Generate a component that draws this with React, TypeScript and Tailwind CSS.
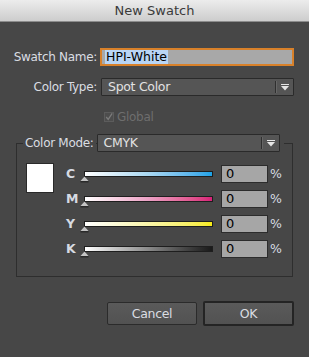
import React from 'react'

const font = { fontFamily: '"DejaVu Sans", "Liberation Sans", sans-serif' }

function Arrow() {
  return (
    <svg width="8" height="7" viewBox="0 0 8 7" className="block">
      <rect x="0" y="0" width="8" height="1" fill="#e6e6e6" />
      <path d="M0 2 H8 L4 6.5 Z" fill="#e6e6e6" />
    </svg>
  )
}

function Select({ value, w }: { value: string; w: string }) {
  return (
    <div className={`${w} h-[18px] flex items-center bg-[#555555] border border-[#2a2a2a] rounded-[1px]`}>
      <span className="flex-1 pl-[6px] text-[#e2e2e2] text-[12.5px]">{value}</span>
      <span className="w-px h-[12px] bg-[#2f2f2f]" />
      <span className="w-px h-[12px] bg-[#666]" />
      <span className="w-[16px] flex justify-center">
        <Arrow />
      </span>
    </div>
  )
}

const channels = [
  { k: 'C', grad: 'bg-gradient-to-r from-white via-[#a9d8f2] to-[#1aa3e8]' },
  { k: 'M', grad: 'bg-gradient-to-r from-white via-[#eaa0c4] to-[#d81f78]' },
  { k: 'Y', grad: 'bg-gradient-to-r from-white via-[#fbf6a8] to-[#f7ec12]' },
  { k: 'K', grad: 'bg-gradient-to-r from-white via-[#8a8a8a] to-[#1a1a1a]' },
]

function SliderRow({ k, grad }: { k: string; grad: string }) {
  return (
    <div className="flex items-start h-[18px]">
      <span className="w-[18px] pt-[2px] text-[#d6dbe2] text-[12.5px] font-bold">{k}</span>
      <div className="relative w-[129px] h-[18px]">
        <div className={`mt-[6px] h-[6px] border border-[#1e1e1e] ${grad}`} />
        <svg width="9" height="7" viewBox="0 0 9 7" className="absolute left-[-4px] top-[11px]">
          <path d="M4.5 0.5 L8.5 5 H0.5 Z" fill="#c4c4c4" />
          <rect x="0.5" y="5" width="8" height="1.5" fill="#2a2a2a" />
        </svg>
      </div>
      <div className="ml-[8px] w-[47px] h-[18px] bg-[#a6a6a6] border border-[#2c2c2c] pl-[4px] text-[13px] leading-[16px] text-black">0</div>
      <span className="ml-[2px] pt-[2px] text-[#d6dbe2] text-[12.5px]">%</span>
    </div>
  )
}

export default function App() {
  return (
    <div style={font} className="w-[309px] h-[357px] bg-[#474747] flex flex-col text-[12px] leading-[14px] tracking-[-0.3px] overflow-hidden">
      {/* title bar */}
      <div className="h-[22px] bg-gradient-to-b from-[#ececec] to-[#cdcdcd] border-b border-[#8c8c8c] flex items-center justify-center text-[#3a3a3a] text-[13px] tracking-normal">
        New Swatch
      </div>

      {/* name */}
      <div className="flex items-center mt-[26px]">
        <span className="w-[97px] text-right text-[#dadde2]">Swatch Name:</span>
        <div className="ml-[3px] w-[194px] h-[18px] bg-[#a8a8a8] border-2 border-[#d8812a] flex items-center pl-[3px]">
          <span className="bg-[#b9d5f5] text-black px-[1px] leading-[14px] text-[12.5px] tracking-normal">HPI-White</span>
        </div>
      </div>

      {/* color type */}
      <div className="flex items-center mt-[12px]">
        <span className="w-[97px] text-right text-[#dadde2]">Color Type:</span>
        <div className="ml-[4px]">
          <Select value="Spot Color" w="w-[193px]" />
        </div>
      </div>

      {/* global */}
      <div className="flex items-center mt-[14px] pl-[104px] text-[#6e6e6e]">
        <span className="w-[10px] h-[10px] border border-[#5c5c5c] bg-[#4d4d4d] flex items-center justify-center">
          <svg width="10" height="10" viewBox="0 0 10 10">
            <path d="M1.5 5 L4 8 L9 0.5" stroke="#7c7c7c" strokeWidth="1.6" fill="none" />
          </svg>
        </span>
        <span className="ml-[3px]">Global</span>
      </div>

      {/* color mode group */}
      <div className="ml-[16px] mt-[19px] w-[277px] h-[134px] border border-[#2e2e2e]">
        <div className="flex items-center -mt-[10px]">
          <span className="ml-[6px] px-[2px] bg-[#474747] text-[#dadde2]">Color Mode:</span>
          <div className="ml-[1px] bg-[#474747] pr-[4px]">
            <Select value="CMYK" w="w-[183px]" />
          </div>
        </div>
        <div className="flex mt-[11px]">
          <div className="ml-[9px] w-[28px] h-[30px] bg-white border border-[#2a2a2a]" />
          <div className="ml-[12px] mt-[2px] flex flex-col gap-[7px]">
            {channels.map(c => (
              <SliderRow key={c.k} k={c.k} grad={c.grad} />
            ))}
          </div>
        </div>
      </div>

      {/* buttons */}
      <div className="flex items-center mt-[24px] pl-[107px] gap-[6px] text-[#dadde2] text-[12.5px]">
        <button className="w-[90px] h-[23px] bg-gradient-to-b from-[#5a5a5a] to-[#525252] border border-[#2b2b2b] rounded-[2px]">Cancel</button>
        <button className="w-[91px] h-[25px] bg-gradient-to-b from-[#5a5a5a] to-[#525252] border-2 border-[#242424] rounded-[2px]">OK</button>
      </div>
    </div>
  )
}
